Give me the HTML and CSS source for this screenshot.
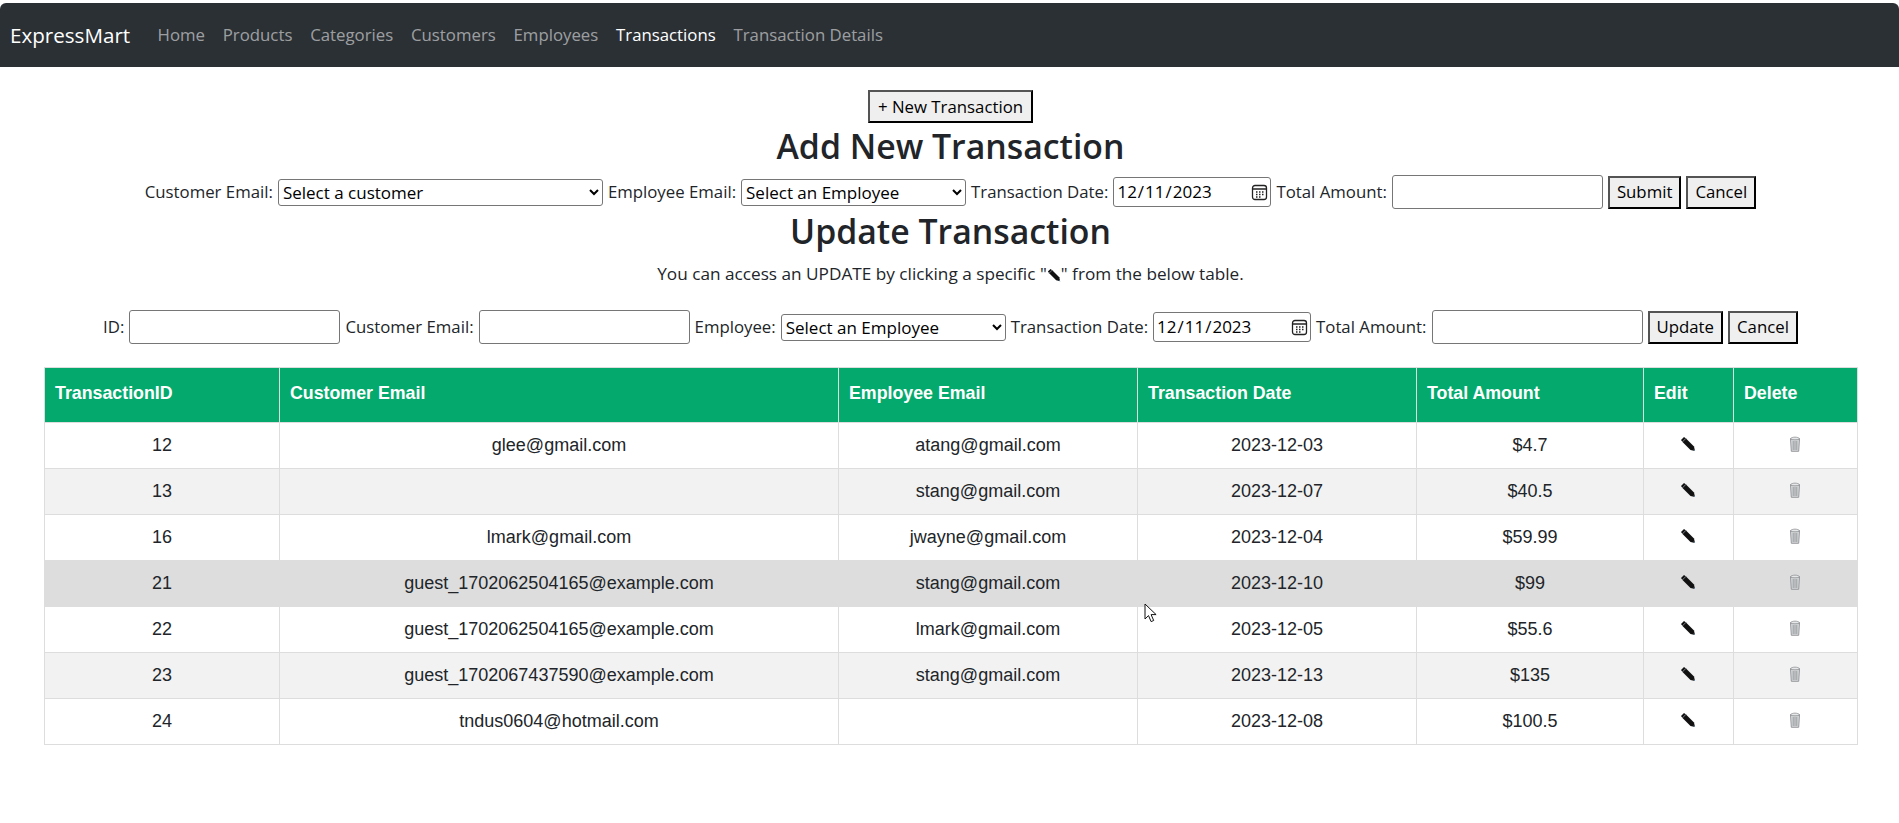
FILE: index.html

```html
<!DOCTYPE html>
<html lang="en">
<head>
    <meta charset="UTF-8">
    <title>ExpressMart</title>
    <link rel="stylesheet" href="styles.css">
</head>
<body>
<svg class="defs" width="0" height="0">
    <symbol id="pencil" viewBox="0 0 16 16">
        <path d="M1 4 4 1 6 2.500l8 8 1 4.500-4.500-1-8-8z" fill="#111"/>
        <path d="M2.300 6 6 2.300" stroke="#8a8f94" stroke-width=".9"/>
        <path d="M13.800 13.800 15 15" stroke="#6f8fb0" stroke-width="1"/>
    </symbol>
    <symbol id="trash" viewBox="0 0 16 16">
        <path d="M3.500 3h9l-.8 12.300H4.300z" fill="#d4d6d8" stroke="#8f9295" stroke-width=".9"/>
        <path d="M6.200 5v9M8 5v9M9.800 5v9" stroke="#94979a" stroke-width=".9"/>
        <path d="M3.200 2.800C5 .6 11 .6 12.800 2.800 11 4.200 5 4.200 3.200 2.800z" fill="#e6e7e8" stroke="#8f9295" stroke-width=".8"/>
    </symbol>
</svg>

<nav class="navbar">
    <a class="brand" href="#">ExpressMart</a>
    <a class="nav-link" href="#">Home</a>
    <a class="nav-link" href="#">Products</a>
    <a class="nav-link" href="#">Categories</a>
    <a class="nav-link" href="#">Customers</a>
    <a class="nav-link" href="#">Employees</a>
    <a class="nav-link active" href="#">Transactions</a>
    <a class="nav-link" href="#">Transaction Details</a>
</nav>

<main class="page">
    <button class="new-btn">+ New Transaction</button>
    <h1>Add New Transaction</h1>
    <form class="row-form">
        <label>Customer Email:</label>
        <select class="sel-customer"><option>Select a customer</option></select>
        <label>Employee Email:</label>
        <select class="sel-employee"><option>Select an Employee</option></select>
        <label>Transaction Date:</label>
        <input class="date" type="date" value="2023-12-11">
        <label>Total Amount:</label>
        <input type="text">
        <button type="button">Submit</button>
        <button type="button">Cancel</button>
    </form>

    <h1 class="update-title">Update Transaction</h1>
    <p class="hint">You can access an UPDATE by clicking a specific "<svg class="icon-inline"><use href="#pencil"/></svg>" from the below table.</p>
    <form class="row-form second">
        <label>ID:</label>
        <input type="text">
        <label>Customer Email:</label>
        <input type="text">
        <label>Employee:</label>
        <select class="sel-employee"><option>Select an Employee</option></select>
        <label>Transaction Date:</label>
        <input class="date" type="date" value="2023-12-11">
        <label>Total Amount:</label>
        <input type="text">
        <button type="button">Update</button>
        <button type="button">Cancel</button>
    </form>

    <table>
        <colgroup>
            <col class="c1"><col class="c2"><col class="c3"><col class="c4"><col class="c5"><col class="c6"><col class="c7">
        </colgroup>
        <thead>
            <tr><th>TransactionID</th><th>Customer Email</th><th>Employee Email</th><th>Transaction Date</th><th>Total Amount</th><th>Edit</th><th>Delete</th></tr>
        </thead>
        <tbody>
            <tr><td>12</td><td>glee@gmail.com</td><td>atang@gmail.com</td><td>2023-12-03</td><td>$4.7</td><td><svg class="icon"><use href="#pencil"/></svg></td><td><svg class="icon"><use href="#trash"/></svg></td></tr>
            <tr><td>13</td><td></td><td>stang@gmail.com</td><td>2023-12-07</td><td>$40.5</td><td><svg class="icon"><use href="#pencil"/></svg></td><td><svg class="icon"><use href="#trash"/></svg></td></tr>
            <tr><td>16</td><td>lmark@gmail.com</td><td>jwayne@gmail.com</td><td>2023-12-04</td><td>$59.99</td><td><svg class="icon"><use href="#pencil"/></svg></td><td><svg class="icon"><use href="#trash"/></svg></td></tr>
            <tr class="hover"><td>21</td><td>guest_1702062504165@example.com</td><td>stang@gmail.com</td><td>2023-12-10</td><td>$99</td><td><svg class="icon"><use href="#pencil"/></svg></td><td><svg class="icon"><use href="#trash"/></svg></td></tr>
            <tr><td>22</td><td>guest_1702062504165@example.com</td><td>lmark@gmail.com</td><td>2023-12-05</td><td>$55.6</td><td><svg class="icon"><use href="#pencil"/></svg></td><td><svg class="icon"><use href="#trash"/></svg></td></tr>
            <tr><td>23</td><td>guest_1702067437590@example.com</td><td>stang@gmail.com</td><td>2023-12-13</td><td>$135</td><td><svg class="icon"><use href="#pencil"/></svg></td><td><svg class="icon"><use href="#trash"/></svg></td></tr>
            <tr><td>24</td><td>tndus0604@hotmail.com</td><td></td><td>2023-12-08</td><td>$100.5</td><td><svg class="icon"><use href="#pencil"/></svg></td><td><svg class="icon"><use href="#trash"/></svg></td></tr>
        </tbody>
    </table>
</main>

<svg class="cursor" width="14" height="20" viewBox="0 0 14 20">
    <path d="M1 1v15l3.500-3.400 2.600 6 2.600-1.100-2.600-5.900h5z" fill="#fff" stroke="#111"/>
</svg>
</body>
</html>
```

FILE: styles.css

```css
body { margin: 0; padding-top: 3px; background: #fff; color: #212529; font-family: "Open Sans", sans-serif; font-size: 16.8px; line-height: 1.5; }
.defs { position: absolute; }
.navbar { display: flex; align-items: center; height: 64px; padding-left: 10px; background: #2b3035; border-radius: 6px 6px 0 0; }
.navbar a { text-decoration: none; white-space: nowrap; }
.brand { margin-right: 18.500px; color: #fff; font-size: 20.600px; }
.nav-link { padding: 0 8.900px; color: rgba(255,255,255,.55); font-size: 16.800px; }
.nav-link.active { color: #fff; }
.page { padding: 23px 0 0 2px; text-align: center; }
h1 { margin: 0; height: 52px; font-size: 33.800px; font-weight: 600; line-height: 46px; color: #212529; }
h1.update-title { height: 50px; line-height: 44px; }
button { height: 33px; padding: 1px 7px; border-radius: 0; font: inherit; font-size: 16.800px; line-height: 1; color: #000; white-space: nowrap; }
.new-btn { display: block; margin: 0 auto; width: 165px; padding: 2px 4px 0; }
.row-form { display: flex; justify-content: center; align-items: center; gap: 5px; height: 34px; white-space: nowrap; }
.row-form.second { margin-top: 19px; }
input, select { box-sizing: border-box; font: inherit; font-size: 17px; color: #000; background: #fff; }
input[type="text"] { width: 211px; height: 34px; padding: 1px 2px; border: 1px solid #767676; border-radius: 3px; }
select { height: 27px; padding: 0 0 2px; border: 1px solid #767676; border-radius: 3px; }
.sel-customer { width: 325px; }
.sel-employee { width: 225px; }
.date { width: 158px; height: 30px; padding: 1px 2px; border: 1px solid #767676; border-radius: 3px; }
.date::-webkit-calendar-picker-indicator { width: 17px; height: 17px; margin: 0; padding: 0; background: url("data:image/svg+xml,%3Csvg xmlns='http://www.w3.org/2000/svg' viewBox='0 0 17 17'%3E%3Crect x='1.500' y='1.500' width='14' height='14' rx='2.500' fill='none' stroke='%23222' stroke-width='1.300'/%3E%3Cpath d='M2 5h13' stroke='%23222' stroke-width='1.600'/%3E%3Cpath d='M5 8h1.500M8 8h1.500M11 8h1.500M5 10.500h1.500M8 10.500h1.500M11 10.500h1.500M5 13h1.500M8 13h1.500' stroke='%23222' stroke-width='1.300'/%3E%3C/svg%3E") no-repeat center; }
.hint { margin: 0; height: 32px; font-size: 17.200px; line-height: 30px; }
.icon-inline { width: 14px; height: 14px; vertical-align: -2px; }
table { box-sizing: border-box; width: 1813px; margin: 23px 0 0 42px; border-collapse: collapse; table-layout: fixed; font-family: "Liberation Sans", Arial, sans-serif; font-size: 18px; color: #212529; }
.c1 { width: 235px; }
.c2 { width: 559px; }
.c3 { width: 299px; }
.c4 { width: 279px; }
.c5 { width: 227px; }
.c6 { width: 90px; }
.c7 { width: 124px; }
th, td { height: 46px; padding: 0 10px; border: 1px solid #ddd; box-sizing: border-box; }
th { height: 55px; padding: 0 10px 3px; background: #04aa6d; color: #fff; text-align: left; font-size: 17.800px; font-weight: 700; }
td { text-align: center; }
tbody tr:nth-child(even) { background: #f2f2f2; }
tbody tr.hover { background: #ddd; }
.icon { display: block; position: relative; left: -1px; width: 16px; height: 16px; margin: -3px auto 0; }
.cursor { position: absolute; left: 1144px; top: 603px; }
```
